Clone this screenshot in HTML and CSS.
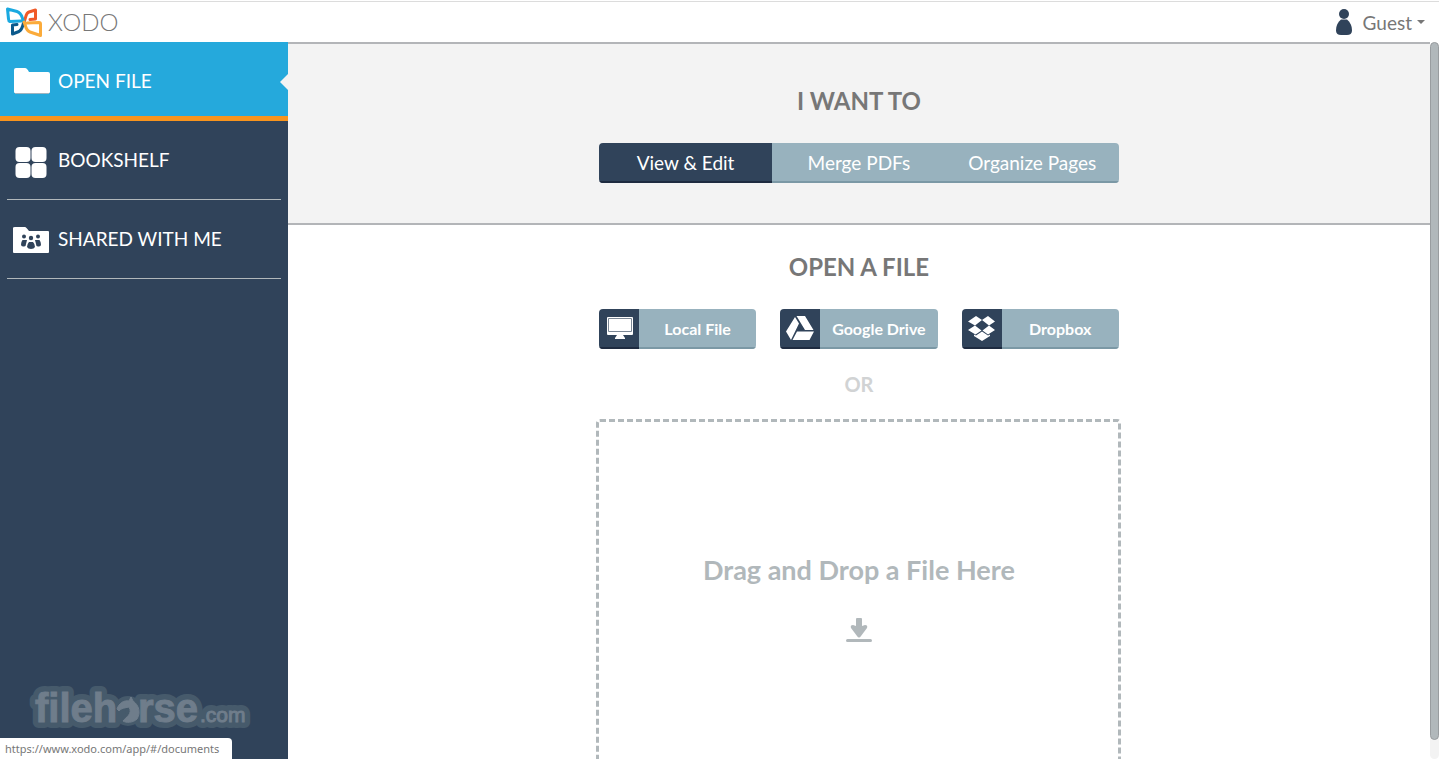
FILE: index.html
```html
<!DOCTYPE html>
<html lang="en">
<head>
<meta charset="utf-8">
<meta name="viewport" content="width=device-width, initial-scale=1">
<title>Xodo</title>
<link rel="stylesheet" href="styles.css">
</head>
<body>
<header class="topbar">
  <a class="brand" href="#">
    <svg class="brand-mark" viewBox="0 0 36 30" width="36" height="30" aria-hidden="true" fill="none" stroke-width="3" stroke-linejoin="round" stroke-linecap="round">
      <path stroke="#0b5a8c" d="M11 17.500 6.500 18V27L13 24.500C17 22.500 16 19 18 15"/>
      <path stroke="#f05a28" d="M24 12.500 29.500 12V3L23 5C19.500 6 20 11 18 15"/>
      <path stroke="#1aa9e0" d="M15 14 4 14.500Q2.500 14 2.500 12L1.500 2 11 4.500C16 6 15.500 10 18 15"/>
      <path stroke="#fbab3a" d="M21 16 33 15.500Q34.500 15.500 34.500 17V28.500L24 25C19.500 23.500 20 19 18 15"/>
    </svg>
    <span class="brand-name">XODO</span>
  </a>
  <button class="account" type="button">
    <svg viewBox="0 0 16 26" width="16" height="26" aria-hidden="true" fill="#30435a"><circle cx="8" cy="5" r="5"/><path d="M5 10.500H11C14.500 13.500 16 17 16 21.500 16 24.500 14 26 11 26H5C2 26 0 24.500 0 21.500 0 17 1.500 13.500 5 10.500Z"/></svg>
    <span>Guest</span>
    <span class="caret"></span>
  </button>
</header>
<div class="shell">
  <nav class="sidebar">
    <a class="nav-item nav-item-active" href="#/documents">
      <svg class="nav-icon" viewBox="0 0 36 36" width="36" height="36" aria-hidden="true"><path fill="#9fb4bf" d="M1 29H35V31H1Z"/><path fill="#fff" d="M2 5H11Q13 5 15 9H34Q36 9 36 11V29Q36 30 35 30H1Q0 30 0 29V7Q0 5 2 5Z"/></svg>
      <span>OPEN FILE</span>
    </a>
    <a class="nav-item" href="#/bookshelf">
      <svg class="nav-icon" viewBox="0 0 36 36" width="36" height="36" aria-hidden="true" fill="#fff"><rect x="1.500" y="5" width="15" height="15" rx="4"/><rect x="17.500" y="5" width="15" height="15" rx="4"/><rect x="1.500" y="21" width="15" height="15" rx="4"/><rect x="17.500" y="21" width="15" height="15" rx="4"/></svg>
      <span>BOOKSHELF</span>
    </a>
    <a class="nav-item" href="#/shared">
      <svg class="nav-icon" viewBox="0 -1 36 36" width="36" height="36" aria-hidden="true"><path fill="#fff" d="M1 5H11Q12 5 15 9H34Q35 9 35 10V30Q35 31 34 31H0Q-1 31-1 30V6Q-1 5 1 5Z"/><g fill="#30435a"><circle cx="10" cy="14.500" r="2"/><circle cx="24" cy="14.500" r="2"/><circle cx="17" cy="16" r="2.200"/><path d="M8.500 18H13L11.500 24Q7 25.500 7 22.500 7 20 8.500 18ZM21 18H25.500Q27 20 27 22.500 27 25.500 22.500 24ZM15 20H19Q21 22 21 25 20 27 17 27 14 27 13 25 13 22 15 20Z"/></g></svg>
      <span>SHARED WITH ME</span>
    </a>
    <svg class="watermark" viewBox="0 0 228 48" width="228" height="48" role="img" aria-label="filehorse.com">
      <g class="watermark-halo"><text x="8" y="37" class="wm-big">fileh</text><circle cx="101" cy="26" r="9"/><text x="111" y="37" class="wm-big">rse</text><text x="173" y="37" class="wm-small">.com</text></g>
      <g class="watermark-face"><text x="8" y="37" class="wm-big">fileh</text><path d="M90 24C92 18 97 15 102 16L104 12 106 16C112 20 114 28 110 34 106 38 99 38 96 36 99 32 106 29 102 22 98 23 94 23 92 26Z"/><text x="111" y="37" class="wm-big">rse</text><text x="173" y="37" class="wm-small">.com</text></g>
    </svg>
  </nav>
  <main class="content">
    <section class="intent">
      <h2 class="heading">I WANT TO</h2>
      <div class="segments">
        <button class="segment segment-active" type="button">View &amp; Edit</button>
        <button class="segment" type="button">Merge PDFs</button>
        <button class="segment" type="button">Organize Pages</button>
      </div>
    </section>
    <section class="open">
      <h2 class="heading">OPEN A FILE</h2>
      <div class="sources">
        <button class="source" type="button">
          <span class="source-icon"><svg viewBox="0 0 28 28" width="28" height="28" aria-hidden="true"><path fill="#fff" d="M2 3H27Q28 3 28 4V20Q28 21 27 21H18L20 24V25H10V24L12 21H3Q2 21 2 20V4Q2 3 3 3Z"/><path fill="none" stroke="#7b8795" d="M3.500 4.500H26.500V17.500H3.500Z"/></svg></span>
          <span class="source-label">Local File</span>
        </button>
        <button class="source" type="button">
          <span class="source-icon"><svg viewBox="0 0 28 28" width="28" height="28" aria-hidden="true" fill="#fff"><path d="M9 3 13 9.500 5 26 0 17.500ZM10.500 2H19L27.500 16H19ZM11 17.500H28L23.500 26H6.500Z"/></svg></span>
          <span class="source-label">Google Drive</span>
        </button>
        <button class="source" type="button">
          <span class="source-icon"><svg viewBox="0 0 28 28" width="28" height="28" aria-hidden="true" fill="#fff"><path d="M8 2 14 6 7 11.500 0 7.500ZM20 2 27 7.500 21 11.500 14 6ZM7 11.500 13.500 16.500 7.500 20.500 0 16ZM21 11.500 27 16 20 20.500 14.500 16.500ZM14 17.500 20 21.500 22 20.500V22L14 27 6 22V20.500L8 21.500Z"/></svg></span>
          <span class="source-label">Dropbox</span>
        </button>
      </div>
      <p class="or">OR</p>
      <div class="dropzone">
        <p class="drop-text">Drag and Drop a File Here</p>
        <svg viewBox="0 0 26 24" width="26" height="24" aria-hidden="true" fill="#b1b8bb"><path d="M10 1Q10 0 11 0H15Q16 0 16 1V8L19 7Q22 7 21 10L15 18Q13 21 11 18L5 10Q4 7 7 7L10 8Z"/><rect y="21" width="26" height="3" rx="1.500"/></svg>
      </div>
    </section>
  </main>
  <div class="scroll-track" aria-hidden="true"><div class="scroll-thumb"></div></div>
</div>
<div class="status">https://www.xodo.com/app/#/documents</div>
</body>
</html>
```
FILE: styles.css
```css
* { box-sizing: border-box; }
body {
  margin: 0;
  height: 100vh;
  display: flex;
  flex-direction: column;
  overflow: hidden;
  background: #fff;
  font-family: Lato, "Liberation Sans", sans-serif;
  color: #777;
}
button { border: 0; padding: 0; margin: 0; font: inherit; background: none; cursor: pointer; }
a { text-decoration: none; color: inherit; }
h2, p { margin: 0; }
svg { display: block; overflow: visible; }

.topbar {
  flex: none;
  height: 42px;
  padding: 0 14px 0 6px;
  display: flex;
  align-items: center;
  justify-content: space-between;
  background: linear-gradient(#fff 1px, #dcdcdc 1px, #dcdcdc 2px, #fff 2px);
}
.brand { display: flex; align-items: center; gap: 6px; padding-top: 2px; }
.brand-name { font-size: 24px; font-weight: 300; line-height: 28px; color: #777; }
.account { display: flex; align-items: center; gap: 11px; padding-top: 2px; color: #777; font-size: 19px; line-height: 24px; }
.account span { padding-top: 2px; }
.account .caret { margin-left: -6px; padding: 0; border: 4px solid transparent; border-top-color: #777; border-bottom: 0; }

.shell { flex: 1; min-height: 0; display: flex; }
.sidebar { position: relative; flex: none; width: 20%; background: #30435a; color: #fff; }
.nav-item {
  display: flex;
  align-items: center;
  gap: 8px;
  height: 79px;
  margin: 0 7px;
  padding: 0 7px;
  border-bottom: 1px solid #b1b8bb;
  font-size: 19px;
  line-height: 24px;
}
.nav-item-active {
  position: relative;
  margin: 0;
  padding: 4px 14px 0;
  background: #25a9dc;
  border-bottom: 5px solid #f8941d;
}
.nav-item-active::after {
  content: "";
  position: absolute;
  right: 0;
  top: 32px;
  border: 8px solid transparent;
  border-right-color: #f3f3f3;
  border-left: 0;
}
.watermark { position: absolute; left: 27px; bottom: 26px; }
.wm-big { font: bold 40px "Liberation Sans", sans-serif; }
.wm-small { font: 21px "Liberation Sans", sans-serif; }
.watermark-halo { fill: #465a6b; stroke: #465a6b; stroke-width: 12px; stroke-linejoin: round; }
.watermark-face { fill: #6f7d8b; stroke: #6f7d8b; stroke-width: 1px; }

.content { flex: 1; min-width: 0; overflow: hidden; }
.intent {
  display: flex;
  flex-direction: column;
  align-items: center;
  gap: 27px;
  padding: 42px 0 40px;
  background: #f3f3f3;
  border-top: 2px solid #b3b5b8;
  border-bottom: 2px solid #b3b5b8;
}
.heading { font-size: 24px; line-height: 30px; font-weight: 700; color: #777; }
.segments {
  display: grid;
  grid-template-columns: repeat(3, 1fr);
  width: 520px;
  max-width: 100%;
  border-radius: 4px;
  overflow: hidden;
}
.segment {
  height: 40px;
  background: #98b2be;
  box-shadow: inset 0 -2px #7b98a5;
  color: #fff;
  font-size: 19px;
  line-height: 24px;
}
.segment-active { background: #30435a; box-shadow: inset 0 -2px #1e2b40; }
.open { display: flex; flex-direction: column; align-items: center; padding-top: 27px; }
.sources {
  display: grid;
  grid-template-columns: repeat(3, 1fr);
  gap: 24px;
  width: 520px;
  max-width: 100%;
  margin-top: 27px;
}
.source { display: flex; height: 40px; border-radius: 4px; overflow: hidden; color: #fff; font-size: 16px; font-weight: 700; }
.source-icon {
  flex: none;
  width: 40px;
  height: 40px;
  padding: 5px 6px;
  background: #30435a;
  border-bottom: 2px solid #1e2b40;
}
.source-label {
  flex: 1;
  height: 40px;
  line-height: 40px;
  background: #98b2be;
  box-shadow: inset 0 -2px #7b98a5;
}
.or { margin-top: 23px; font-size: 20px; line-height: 24px; font-weight: 700; color: #d1d3d4; }
.dropzone {
  display: flex;
  flex-direction: column;
  align-items: center;
  gap: 31px;
  width: 525px;
  max-width: 100%;
  height: 400px;
  margin-top: 23px;
  padding-top: 131px;
  border: 3px dashed #b1b8bb;
  border-radius: 4px;
}
.drop-text { font-size: 27px; line-height: 34px; font-weight: 700; color: #b1b8bb; }
.scroll-track { flex: none; width: 9px; background: #f3f3f3; border-radius: 5px; }
.scroll-thumb { height: calc(100% - 19px); border: 1px solid #999da0; border-radius: 5px; background: #b1b8bb; }
.status {
  position: absolute;
  left: 0;
  bottom: 0;
  padding: 0 13px 0 5px;
  background: #fff;
  border-top-right-radius: 4px;
  font-family: "Noto Sans", sans-serif;
  font-size: 11px;
  line-height: 21px;
  color: #777;
}
```
